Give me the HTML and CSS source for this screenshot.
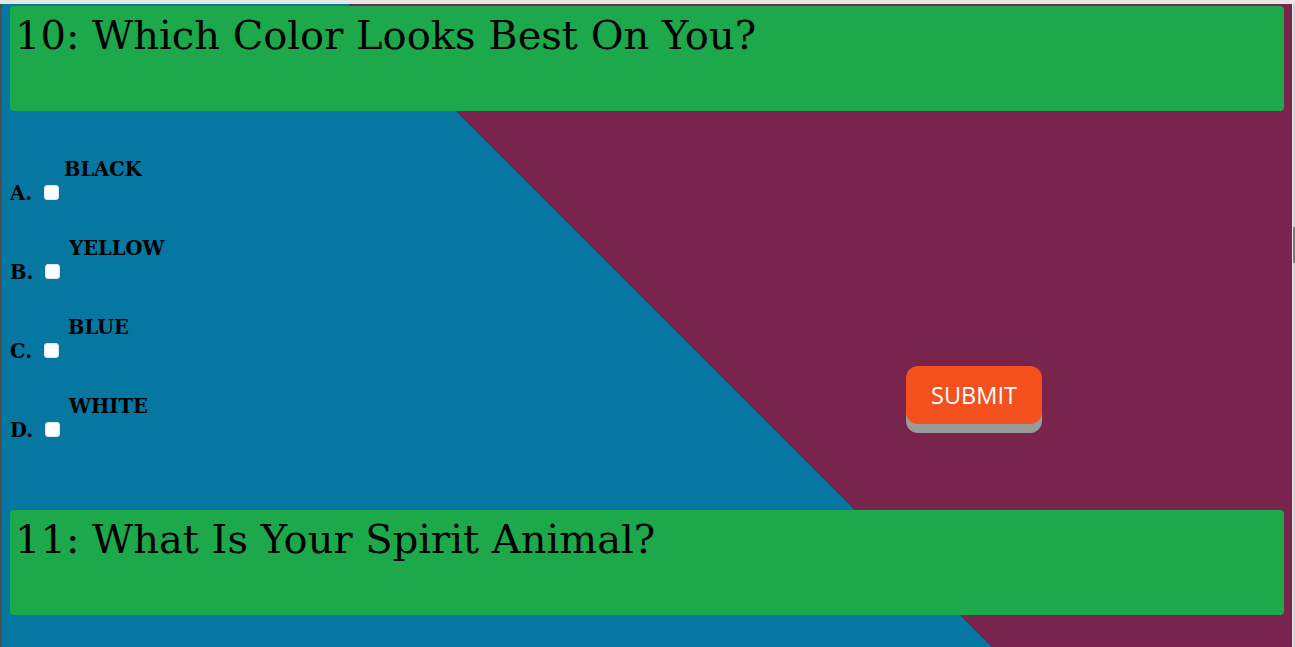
FILE: index.html
```html
<!DOCTYPE html>
<html lang="en">
<head>
<meta charset="utf-8">
<title>Quiz</title>
<link rel="stylesheet" href="styles.css">
</head>
<body>
<div class="topbar"></div>
<div class="window">
  <div class="edge-left"></div>
  <main class="viewport">
    <section class="question">
      <h1 class="q-title">10: Which Color Looks Best On You?</h1>
      <div class="q-body">
        <div class="options">
          <div class="option"><span class="letter">A.</span><input class="check" type="checkbox"><span class="opt-text opt-text--near">BLACK</span></div>
          <div class="option"><span class="letter">B.</span><input class="check" type="checkbox"><span class="opt-text">YELLOW</span></div>
          <div class="option"><span class="letter">C.</span><input class="check" type="checkbox"><span class="opt-text">BLUE</span></div>
          <div class="option"><span class="letter">D.</span><input class="check" type="checkbox"><span class="opt-text">WHITE</span></div>
        </div>
        <button class="submit" type="button">SUBMIT</button>
      </div>
    </section>
    <section class="question">
      <h1 class="q-title">11: What Is Your Spirit Animal?</h1>
    </section>
  </main>
  <div class="scrollbar"><div class="thumb"></div></div>
</div>
</body>
</html>
```
FILE: styles.css
```css
html, body {
  margin: 0;
  padding: 0;
  height: 647px;
  overflow: hidden;
  background: #e4e4e4;
}

.topbar {
  height: 4px;
  background: #e6e6e6;
}

.window {
  display: flex;
  height: 643px;
}

.edge-left {
  width: 2px;
  background: #4d4d4d;
}

.viewport {
  flex: 1;
  height: 643px;
  overflow: hidden;
  padding: 2px 8px 0;
  box-sizing: border-box;
  background: linear-gradient(45deg, #0577a1 700px, #79244c 700px);
  font-family: "DejaVu Serif", serif;
}

.scrollbar {
  width: 3px;
  background: #d4d4d4;
  border-left: 1px solid #ececec;
  box-sizing: border-box;
}

.thumb {
  margin-top: 223px;
  height: 36px;
  background: #7a7a7a;
}

.q-title {
  margin: 0;
  height: 105px;
  box-sizing: border-box;
  padding: 5px 6px 5px 5px;
  background: #1ea84c;
  border-radius: 4px;
  font-family: "DejaVu Serif", serif;
  font-weight: normal;
  font-size: 40px;
  line-height: 48px;
  color: #000;
}

.q-body {
  display: flex;
  align-items: flex-start;
}

.options {
  flex: 1;
  padding-top: 48px;
  padding-bottom: 35px;
}

.option {
  font-weight: bold;
  font-size: 19.5px;
  line-height: 22px;
  color: #000;
  margin-bottom: 33px;
  white-space: nowrap;
}

.letter {
  display: inline-block;
}

.check {
  appearance: none;
  -webkit-appearance: none;
  display: inline-block;
  width: 15px;
  height: 15px;
  margin: 0 0 0 12px;
  background: #fff;
  border: 1px solid #e2e2e2;
  border-radius: 3px;
  box-sizing: border-box;
  vertical-align: baseline;
}

.opt-text {
  margin-left: 9px;
  vertical-align: 24px;
}

.opt-text--near {
  margin-left: 5px;
}

.submit {
  margin: 255px 242px 0 0;
  width: 136px;
  height: 58px;
  border: 0;
  border-radius: 12px;
  background: #f5511f;
  box-shadow: 0 9px 0 #9a9a9a;
  color: #fff;
  font-family: "Open Sans", sans-serif;
  font-size: 23.5px;
  padding: 0;
}
```
